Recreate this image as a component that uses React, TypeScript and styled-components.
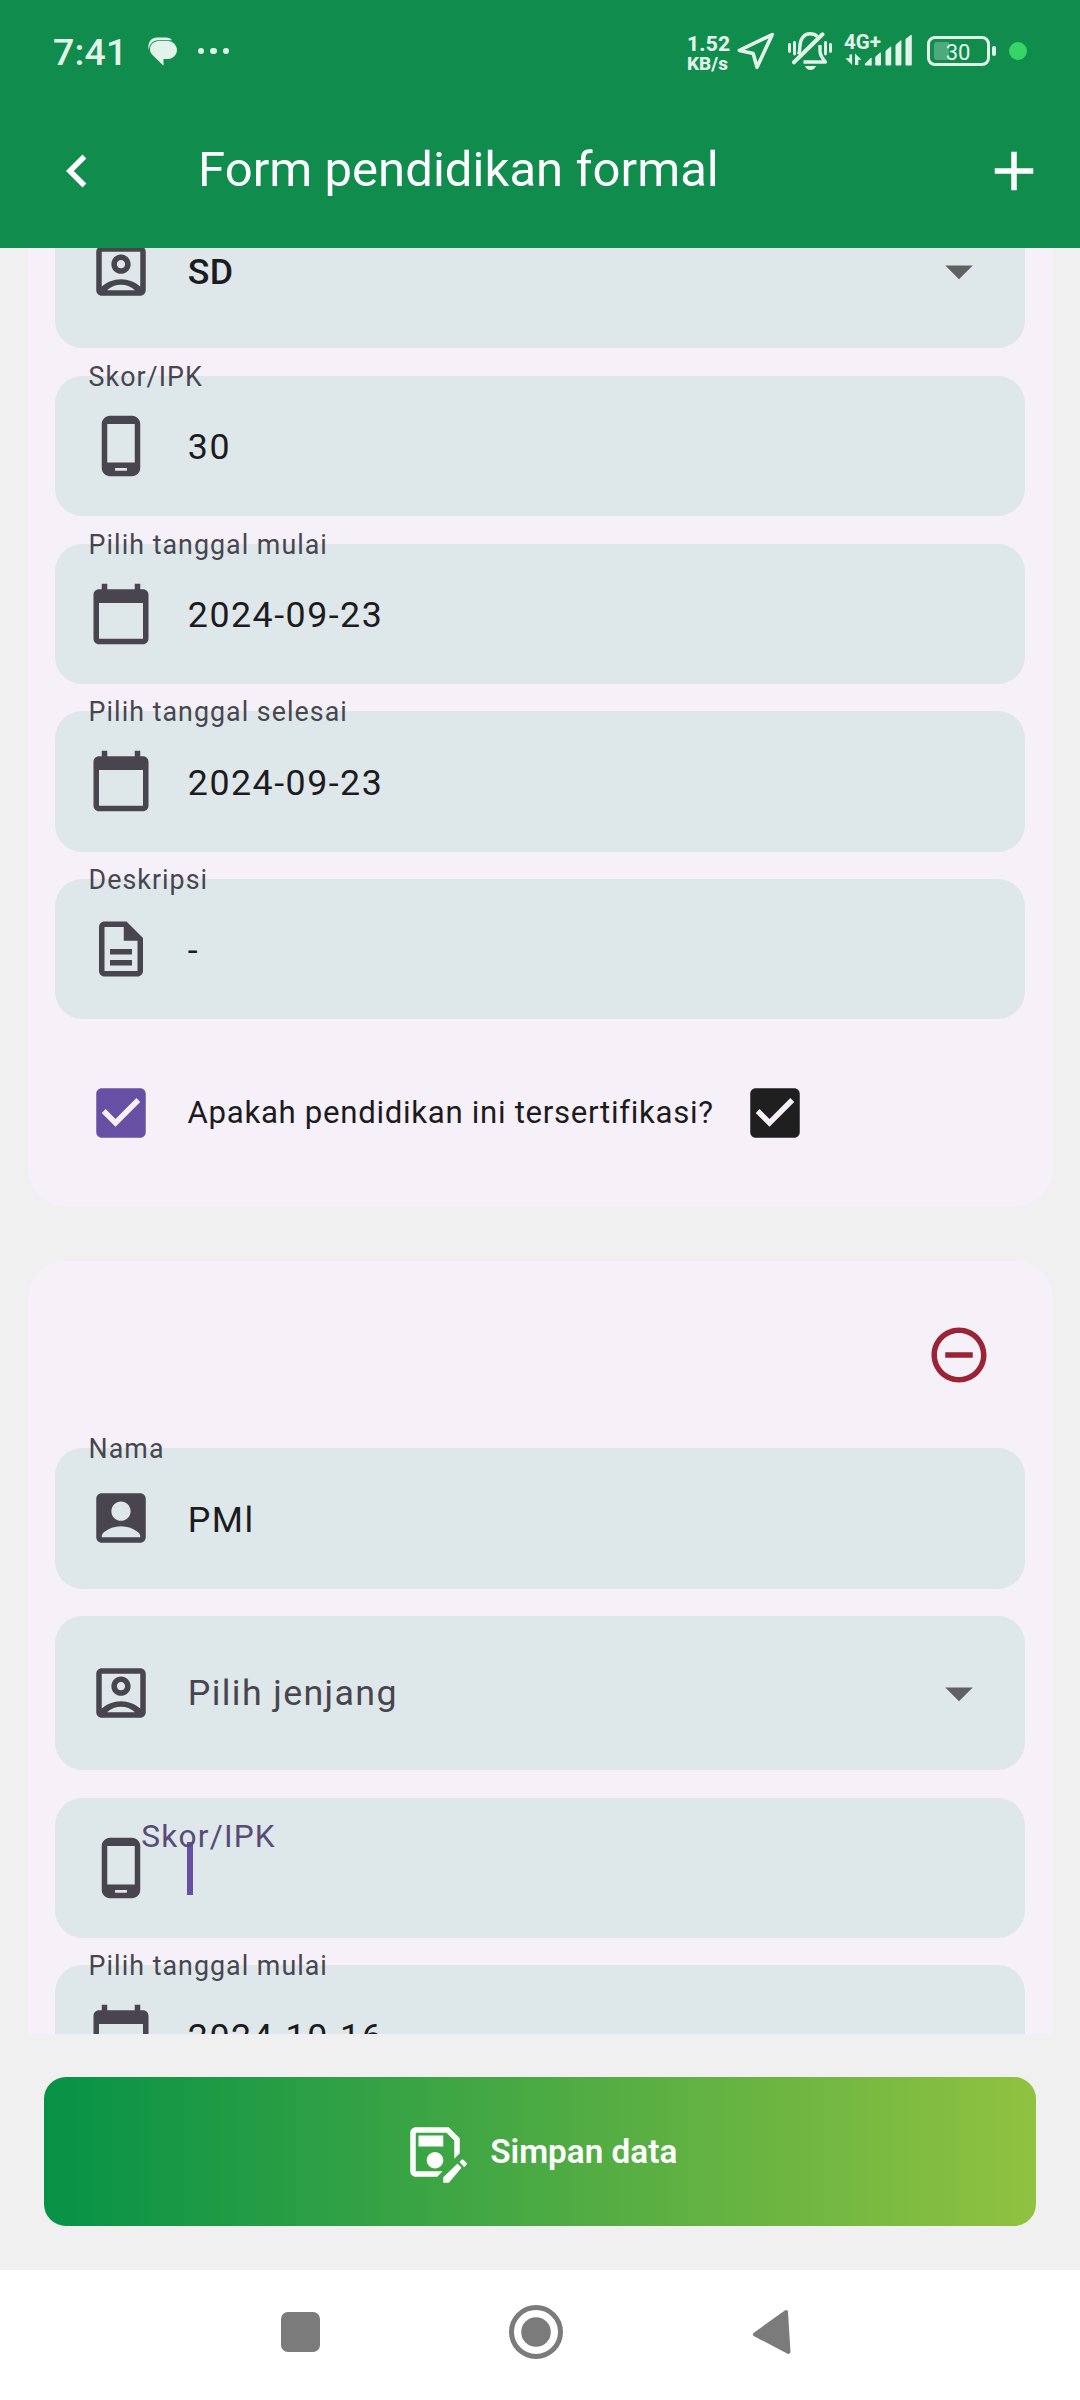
import React from "react";
import styled, { createGlobalStyle } from "styled-components";

const GlobalStyle = createGlobalStyle`
  *, *::before, *::after { box-sizing: border-box; }
  html, body { margin: 0; padding: 0; background: #f0f0f0; }
  body { width: 1080px; height: 2400px; overflow: hidden; font-family: Roboto, "Noto Sans", sans-serif; }
`;

const Screen = styled.div`
  display: flex;
  flex-direction: column;
  width: 1080px;
  height: 2400px;
  background: #f0f0f0;
`;

const Header = styled.header`
  display: flex;
  flex-direction: column;
  height: 248px;
  flex: none;
  background: #108c4d;
  color: #fff;
`;

const StatusBar = styled.div`
  display: flex;
  align-items: center;
  height: 102px;
  flex: none;
  padding-left: 53px;
  padding-right: 53px;
  color: #e2f3ea;
`;

const Clock = styled.span`
  width: 95px;
  font-size: 37.5px;
  font-weight: 500;
  line-height: 40px;
  letter-spacing: 0.2px;
  padding-top: 2px;
`;

const StatusIcons = styled.div`
  display: flex;
  align-items: center;
  margin-left: auto;
`;

const NetSpeed = styled.div`
  display: flex;
  flex-direction: column;
  width: 50px;
  padding-top: 5px;
  font-weight: 800;
  font-size: 21px;
  line-height: 19px;
  letter-spacing: 0.2px;
`;

const NetUnit = styled.span`
  font-size: 19px;
  letter-spacing: 0;
`;

const Signal = styled.div`
  position: relative;
  width: 70px;
  height: 36px;
  margin-left: 12px;
`;

const SignalLabel = styled.span`
  position: absolute;
  left: 0;
  top: -1px;
  font-size: 20.5px;
  font-weight: 700;
  line-height: 20px;
`;

const Battery = styled.div`
  display: flex;
  align-items: center;
  margin-left: 13px;
`;

const BatteryBody = styled.div`
  position: relative;
  display: flex;
  align-items: center;
  justify-content: center;
  width: 63px;
  height: 30px;
  border: 3px solid #e2f3ea;
  border-radius: 8px;
  font-size: 22px;
  line-height: 24px;
  padding-top: 3px;
  padding-right: 1px;
`;

const BatteryLevel = styled.span`
  position: absolute;
  left: 4px;
  top: 3px;
  width: 15px;
  height: 18px;
  border-radius: 3px 0 0 3px;
  background: #4daa7b;
`;

const BatteryValue = styled.span`
  position: relative;
`;

const BatteryTip = styled.span`
  width: 4px;
  height: 10px;
  margin-left: 2px;
  border-radius: 2px;
  background: #e2f3ea;
`;

const ActiveDot = styled.span`
  width: 18px;
  height: 18px;
  margin-left: 13px;
  border-radius: 50%;
  background: #37d567;
`;

const AppBar = styled.div`
  display: flex;
  align-items: center;
  height: 138px;
  padding: 0 33px 0 44px;
`;

const Title = styled.h1`
  flex: 1;
  margin: 0 0 2px 88px;
  font-size: 49px;
  font-weight: 400;
  line-height: 60px;
  letter-spacing: 0.05px;
  white-space: nowrap;
`;

const IconButton = styled.button`
  display: flex;
  align-items: center;
  justify-content: center;
  padding: 0;
  border: 0;
  background: none;
  color: inherit;
`;

const FormList = styled.main`
  display: flex;
  flex-direction: column;
  gap: 55px;
  height: 1786px;
  flex: none;
  padding: 0 27.5px;
  overflow: hidden;
`;

const Card = styled.section<{ $scrolled?: boolean }>`
  display: flex;
  flex-direction: column;
  flex: none;
  gap: 27.5px;
  padding: 27.5px;
  margin-top: ${(p) => (p.$scrolled ? "-81.2px" : "0")};
  border-radius: 38px;
  background: #f6f1f9;
`;

const FieldBox = styled.div<{ $tall?: boolean }>`
  position: relative;
  display: flex;
  align-items: center;
  flex: none;
  height: ${(p) => (p.$tall ? "154px" : "140.25px")};
  padding: 0 33px;
  border-radius: 27.5px;
  background: #dee7e9;
  color: #49454f;
`;

const FieldLabel = styled.label<{ $floating?: boolean }>`
  position: absolute;
  left: ${(p) => (p.$floating ? "86.3px" : "33.6px")};
  top: ${(p) => (p.$floating ? "19.4px" : "-19px")};
  font-size: ${(p) => (p.$floating ? "31.6px" : "26.8px")};
  line-height: 40px;
  letter-spacing: 0.0385em;
  color: ${(p) => (p.$floating ? "#584b78" : "#49454f")};
  white-space: nowrap;
`;

const FieldValue = styled.span<{ $muted?: boolean; $strong?: boolean }>`
  flex: 1;
  margin-left: 33.8px;
  padding-top: ${(p) => (p.$muted ? "0" : p.$strong ? "1px" : "2.4px")};
  font-size: 35.75px;
  font-weight: ${(p) => (p.$strong ? 500 : 400)};
  line-height: 44px;
  letter-spacing: ${(p) => (p.$strong ? "0.2px" : p.$muted ? "1.375px" : "1.5px")};
  color: ${(p) => (p.$muted ? "#49454f" : "#1d1b20")};
  white-space: nowrap;
`;

const Caret = styled.span`
  width: 5.5px;
  height: 53px;
  margin-left: 33px;
  margin-top: 1px;
  background: #6750a4;
`;

const CheckRow = styled.div`
  display: flex;
  align-items: center;
  height: 132px;
  padding: 0 33px;
`;

const CheckText = styled.span`
  width: 554.5px;
  margin-left: 33.5px;
  padding-top: 1px;
  font-size: 31.2px;
  line-height: 40px;
  letter-spacing: 0.69px;
  color: #1d1b20;
  white-space: nowrap;
`;

const RemoveRow = styled.div`
  display: flex;
  justify-content: flex-end;
  height: 132px;
`;

const RemoveButton = styled(IconButton)`
  width: 132px;
  height: 132px;
  color: #9b2335;
`;

const Footer = styled.footer`
  display: flex;
  flex: none;
  height: 236px;
  padding: 43.3px 44px 44px;
`;

const SaveButton = styled.button`
  display: flex;
  align-items: center;
  justify-content: center;
  gap: 22.5px;
  flex: 1;
  padding: 0 1px 0 0;
  border: 0;
  border-radius: 22px;
  background: linear-gradient(90deg, #069246 0%, #90c240 100%);
  color: #fff;
  font-family: inherit;
  font-size: 33.3px;
  font-weight: 600;
  white-space: nowrap;
`;

const NavBar = styled.nav`
  display: flex;
  flex: none;
  align-items: center;
  height: 130px;
  padding: 0 281px;
  gap: 189px;
  background: #fff;
`;

const RecentKey = styled.span`
  width: 39px;
  height: 40px;
  margin-top: -6px;
  border-radius: 7px;
  background: #7b7b7b;
`;

const KeyGlyph = styled.svg`
  display: block;
  flex: none;
  margin-top: -6px;
`;

const Glyph = styled.svg`
  display: block;
  flex: none;
  width: 66px;
  height: 66px;
  fill: currentColor;
`;

const ICONS = {
  back: "M15.41 7.41L14 6l-6 6 6 6 1.41-1.41L10.83 12z",
  add: "M19 13h-6v6h-2v-6H5v-2h6V5h2v6h6z",
  phone:
    "M16 1H8C6.34 1 5 2.34 5 4v16c0 1.66 1.34 3 3 3h8c1.66 0 3-1.34 3-3V4c0-1.66-1.34-3-3-3zM14.15 21h-4.3v-1h4.3zM17 18H7V4h10z",
  calendar:
    "M20 3h-1V1h-2v2H7V1H5v2H4c-1.1 0-2 .9-2 2v16c0 1.1.9 2 2 2h16c1.1 0 2-.9 2-2V5c0-1.1-.9-2-2-2zm0 18H4V8h16v13z",
  description:
    "M8 16h8v2H8zm0-4h8v2H8zm6-10H6c-1.1 0-2 .9-2 2v16c0 1.1.89 2 1.99 2H18c1.1 0 2-.9 2-2V8l-6-6zm4 18H6V4h7v5h5v11z",
  account:
    "M19 3H5c-1.1 0-2 .9-2 2v14c0 1.1.9 2 2 2h14c1.1 0 2-.9 2-2V5c0-1.1-.9-2-2-2zM12 6c1.93 0 3.5 1.57 3.5 3.5S13.93 13 12 13s-3.5-1.57-3.5-3.5S10.07 6 12 6zM19 19H5v-.23c0-.62.28-1.2.76-1.58C7.47 15.82 9.64 15 12 15s4.53.82 6.24 2.19c.48.38.76.97.76 1.58V19z",
  accountOutlined:
    "M19 3H5c-1.1 0-2 .9-2 2v14c0 1.1.9 2 2 2h14c1.1 0 2-.9 2-2V5c0-1.1-.9-2-2-2zM7 18.9C8.4 17.7 10.2 17 12 17s3.6.7 5 1.9V19H7zM19 17.68C17.16 16.02 14.71 15 12 15s-5.16 1.02-7 2.68V5h14zM12 13c1.93 0 3.5-1.57 3.5-3.5S13.93 6 12 6 8.5 7.57 8.5 9.5 10.07 13 12 13zm0-5c.83 0 1.5.67 1.5 1.5S12.83 11 12 11s-1.5-.67-1.5-1.5S11.17 8 12 8z",
  check:
    "M19 3H5c-1.11 0-2 .9-2 2v14c0 1.1.89 2 2 2h14c1.11 0 2-.9 2-2V5c0-1.1-.89-2-2-2zm-9 14l-5-5 1.41-1.41L10 14.17l7.59-7.59L19 8l-9 9z",
  remove:
    "M7 11v2h10v-2H7zm5-9C6.48 2 2 6.48 2 12s4.48 10 10 10 10-4.48 10-10S17.52 2 12 2zm0 18c-4.41 0-8-3.59-8-8s3.59-8 8-8 8 3.59 8 8-3.59 8-8 8z",
  dropdown: "M7 10l5 5 5-5z",
  saveAs:
    "M17 3H5c-1.1 0-2 .9-2 2v14c0 1.1.9 2 2 2h7.8l2-2H5V5h11.17L19 7.83v6.6l2-2V7zM6 6h9v4H6zM12 12c1.66 0 3 1.34 3 3s-1.34 3-3 3-3-1.34-3-3 1.34-3 3-3zM15 21.17V23.2h2.05l4.6-5.5-1.45-1.5zM20.9 15.6l.75-.75c.2-.2.5-.2.7 0l1.1 1.1c.2.2.2.5 0 .7l-.85.85z",
};

type IconName = keyof typeof ICONS;

const Icon = ({ name, color }: { name: IconName; color?: string }) => (
  <Glyph viewBox="0 0 24 24" color={color} fillRule="evenodd">
    <path d={ICONS[name]} />
  </Glyph>
);

interface FieldProps {
  icon: IconName;
  label?: string;
  value?: string;
  select?: boolean;
  placeholder?: boolean;
  focused?: boolean;
}

const Field = ({ icon, label, value, select, placeholder, focused }: FieldProps) => (
  <FieldBox $tall={select}>
    <Icon name={icon} />
    {focused ? (
      <Caret />
    ) : (
      <FieldValue $muted={placeholder} $strong={select && !placeholder}>
        {value}
      </FieldValue>
    )}
    {select && <Icon name="dropdown" color="#616161" />}
    {label && <FieldLabel $floating={focused}>{label}</FieldLabel>}
  </FieldBox>
);

const ChatIcon = () => (
  <svg width="29" height="29" viewBox="0 0 29 29" fill="currentColor">
    <path d="M10.500 4H20C25 4 29 8.500 29 13S25 22 20 22H15.500V28.700L4.500 18C3 16.500 2 14.500 2 12.500 2 8 6 4 10.500 4z" />
    <path d="M.8 13C-1 6 3 .5 9 .5H18c3 0 5 1.200 6 2.800H10C5 3.300 1.500 7.500.8 13z" />
  </svg>
);

const MoreDots = styled.div`
  display: flex;
  gap: 6px;
  margin-left: 21px;

  span {
    width: 6.4px;
    height: 6.4px;
    border-radius: 50%;
    background: currentColor;
  }
`;

const LocationIcon = () => (
  <svg width="38" height="38" viewBox="0 0 38 38" fill="none" stroke="currentColor" strokeWidth="3.6" strokeLinejoin="round">
    <path d="M35.300 2.600L2.400 18.400 16.200 21.600 20 35.300z" />
  </svg>
);

const MutedBell = styled.svg`
  margin-left: 13px;
`;

const MutedBellIcon = () => (
  <MutedBell width="44" height="38" viewBox="0 0 44 38" fill="none" stroke="currentColor" strokeWidth="3.4">
    <path d="M1.500 12.500v7M6.500 10.500v11.500M37.500 10.500v11.500M42.500 12.500v7" strokeWidth="2.900" strokeLinecap="round" />
    <path d="M10.500 22.500c1-2 1.300-4 1.300-7C11.800 7 16 1.800 22 1.800c3.200 0 5.600 1 7.300 2.800" />
    <path d="M6 30.300L34.500 2.300" strokeWidth="4" strokeLinecap="round" />
    <path d="M32 13v6c0 4 2 7 5.500 11H15.500" strokeLinejoin="round" />
    <path d="M17 34h11c-1 2.600-3 4-5.500 4S18 36.600 17 34z" fill="currentColor" stroke="none" />
  </MutedBell>
);

const SignalBars = () => (
  <svg width="70" height="36" viewBox="0 0 70 36" fill="currentColor">
    <path d="M5.500 21.500h2.600V32L1.300 25.300h4.200zM11 32V20.500l6.500 6.300h-3.200V32z" />
    <path d="M20.700 31l6-6q1-.8 1 .4V32.500H22q-1.300 0-1.300-1.500z" />
    <path d="M31.200 24l4.600-4.300q1.200-.8 1.200.6V31.500q0 1-1 1h-3.800q-1 0-1-1z" />
    <path d="M41.500 19q0-1 .8-1.700l4-3.600q.9-.6.900.6V31.500q0 1-1 1h-3.700q-1 0-1-1z" />
    <path d="M51.500 13q0-1 .8-1.700l4.200-3.800q.9-.6.900.6V31.500q0 1-1 1h-3.900q-1 0-1-1z" />
    <path d="M61.500 7q0-1 .8-1.700l4.500-3.400q1-.6 1 .6V31.500q0 1-1 1h-4.300q-1 0-1-1z" />
  </svg>
);

export default function App() {
  return (
    <>
      <GlobalStyle />
      <Screen>
        <Header>
          <StatusBar>
            <Clock>7:41</Clock>
            <ChatIcon />
            <MoreDots>
              <span />
              <span />
              <span />
            </MoreDots>
            <StatusIcons>
              <NetSpeed>
                <span>1.52</span>
                <NetUnit>KB/s</NetUnit>
              </NetSpeed>
              <LocationIcon />
              <MutedBellIcon />
              <Signal>
                <SignalBars />
                <SignalLabel>4G+</SignalLabel>
              </Signal>
              <Battery>
                <BatteryBody>
                  <BatteryLevel />
                  <BatteryValue>30</BatteryValue>
                </BatteryBody>
                <BatteryTip />
              </Battery>
              <ActiveDot />
            </StatusIcons>
          </StatusBar>
          <AppBar>
            <IconButton aria-label="Kembali">
              <Icon name="back" />
            </IconButton>
            <Title>Form pendidikan formal</Title>
            <IconButton aria-label="Tambah">
              <Icon name="add" />
            </IconButton>
          </AppBar>
        </Header>

        <FormList>
          <Card $scrolled>
            <Field icon="accountOutlined" value="SD" select />
            <Field icon="phone" label="Skor/IPK" value="30" />
            <Field icon="calendar" label="Pilih tanggal mulai" value="2024-09-23" />
            <Field icon="calendar" label="Pilih tanggal selesai" value="2024-09-23" />
            <Field icon="description" label="Deskripsi" value="-" />
            <CheckRow>
              <Icon name="check" color="#6750a4" />
              <CheckText>Apakah pendidikan ini tersertifikasi?</CheckText>
              <Icon name="check" color="#1f1f1f" />
            </CheckRow>
          </Card>

          <Card>
            <RemoveRow>
              <RemoveButton aria-label="Hapus">
                <Icon name="remove" />
              </RemoveButton>
            </RemoveRow>
            <Field icon="account" label="Nama" value="PMl" />
            <Field icon="accountOutlined" value="Pilih jenjang" select placeholder />
            <Field icon="phone" label="Skor/IPK" focused />
            <Field icon="calendar" label="Pilih tanggal mulai" value="2024-10-16" />
          </Card>
        </FormList>

        <Footer>
          <SaveButton>
            <Icon name="saveAs" />
            Simpan data
          </SaveButton>
        </Footer>

        <NavBar>
          <RecentKey />
          <KeyGlyph width="54" height="54" viewBox="0 0 54 54">
            <circle cx="27" cy="27" r="24.500" fill="none" stroke="#7b7b7b" strokeWidth="5" />
            <circle cx="27" cy="27" r="14.800" fill="#7b7b7b" />
          </KeyGlyph>
          <KeyGlyph width="40" height="48" viewBox="0 0 40 48">
            <path
              d="M3 26.400L34 4 36.500 44z"
              fill="#7b7b7b"
              stroke="#7b7b7b"
              strokeWidth="4"
              strokeLinejoin="round"
            />
          </KeyGlyph>
        </NavBar>
      </Screen>
    </>
  );
}
